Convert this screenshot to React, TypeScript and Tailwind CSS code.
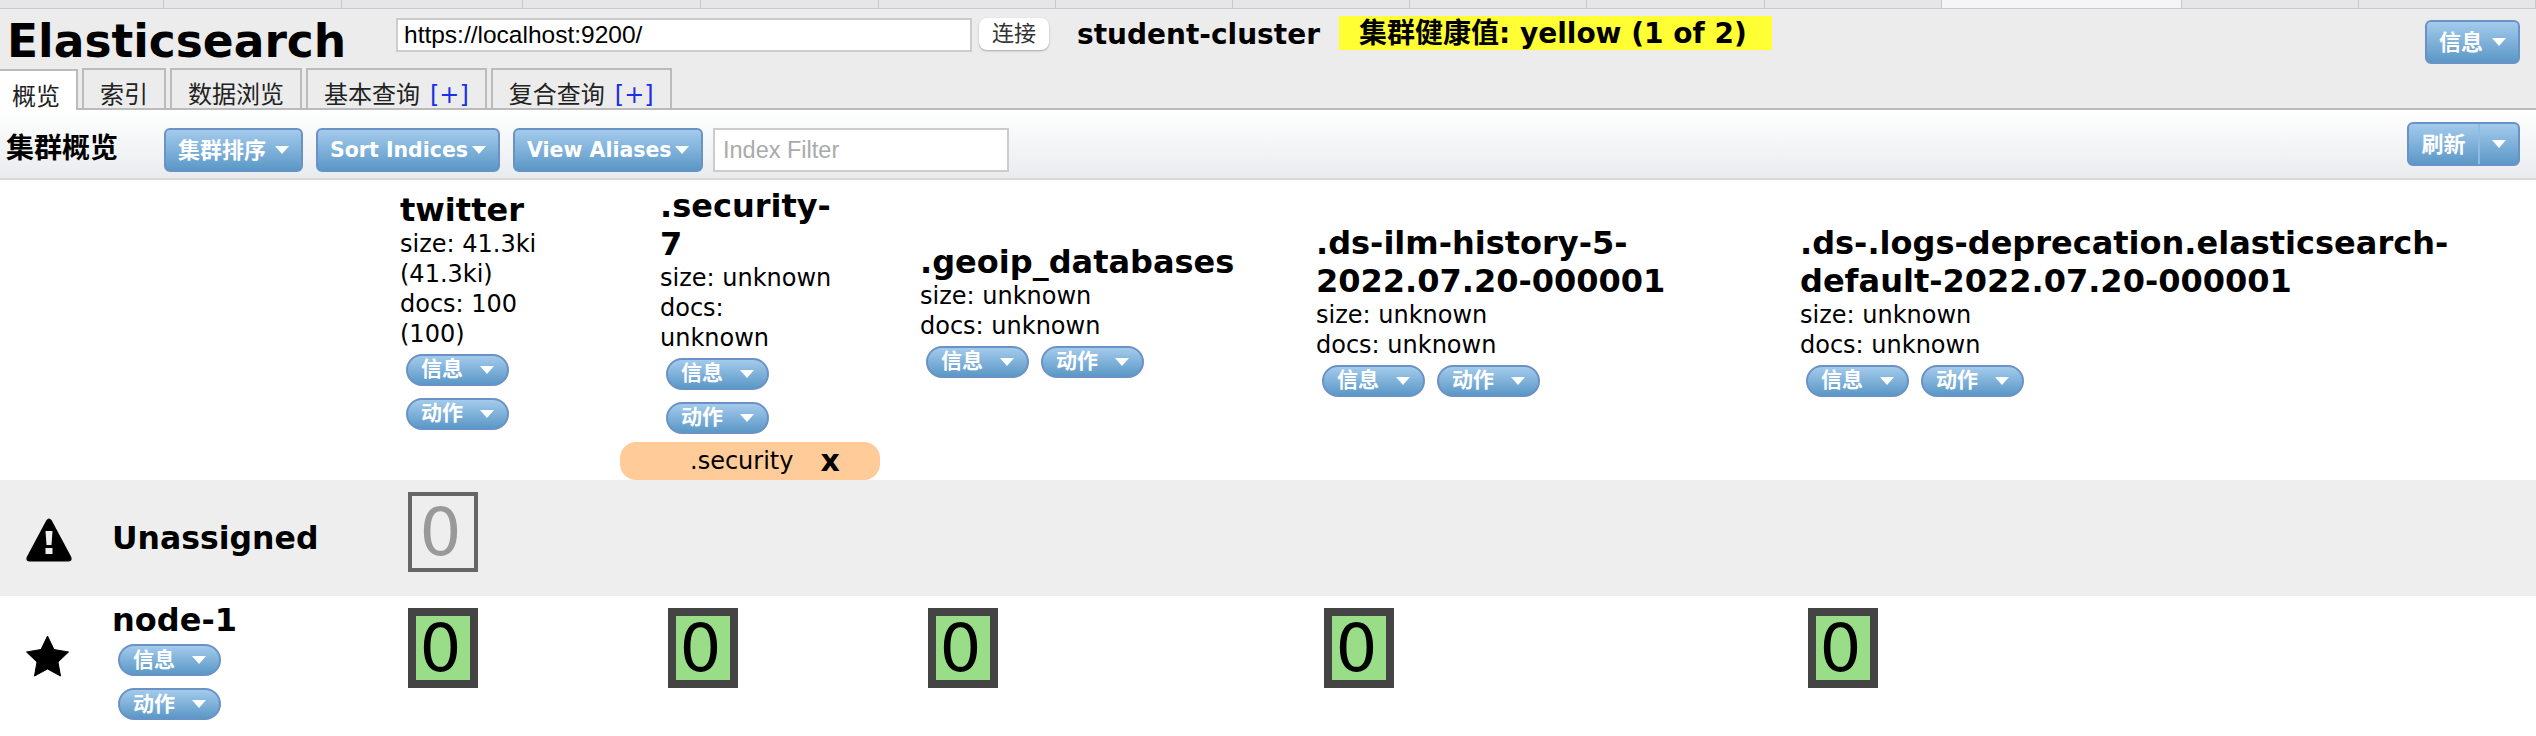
import React from 'react';

const gridCols = 'grid grid-cols-[360px_260px_260px_396px_484px_1fr]';

const Caret = () => (
  <span className="inline-block w-0 h-0 border-x-[7px] border-x-transparent border-t-[8px] border-t-white" />
);

const blueBg = 'bg-gradient-to-b from-[#a3cbec] to-[#5b98c7] border-2 border-[#6b92c6] text-white font-bold';

const MenuButton = ({ label, className = '' }: { label: string; className?: string }) => (
  <button className={`${blueBg} h-[44px] px-[12px] rounded-[6px] flex items-center justify-between whitespace-nowrap ${className}`}>
    {label}
    <Caret />
  </button>
);

const PillButton = ({ label }: { label: string }) => (
  <button className={`${blueBg} w-[103px] h-[32px] pl-[13px] pr-[13px] rounded-full flex items-center justify-between text-[21px] leading-none`}>
    {label}
    <Caret />
  </button>
);

const IndexHead = ({ name, lines, narrow }: { name: React.ReactNode; lines: string[]; narrow?: boolean }) => (
  <div className="pl-[40px] flex items-center">
    <div className={narrow ? 'w-[176px]' : ''}>
      <div className="text-[32px] leading-[38px] font-bold">{name}</div>
      <div className="text-[24px] leading-[30px]">
        {lines.map((l) => (
          <div key={l}>{l}</div>
        ))}
      </div>
      <div className="flex flex-wrap gap-[12px] ml-[6px] mt-[5px]">
        <PillButton label="信息" />
        <PillButton label="动作" />
      </div>
    </div>
  </div>
);

const Shard = ({ active }: { active?: boolean }) => (
  <div className="pl-[48px]">
    <div
      className={
        active
          ? 'w-[70px] h-[80px] border-[8px] border-[#444444] bg-[#99dd88] flex items-center justify-center pr-[5px] text-[66px] text-black'
          : 'w-[70px] h-[80px] border-[4px] border-[#666666] flex items-center justify-center pr-[5px] text-[66px] text-[#999999]'
      }
    >
      0
    </div>
  </div>
);

const WarningIcon = () => (
  <svg width="46" height="44" viewBox="0 0 46 44" className="block">
    <path
      fillRule="evenodd"
      d="M20.5 2 Q23 -1 25.5 2 L45 38.5 Q47 43 42.5 43.5 L3.5 43.5 Q-1 43 1 38.5 Z M19.5 13 L26.5 13 L25.5 27 L20.5 27 Z M19.5 30 L26.5 30 L26.5 36 L19.5 36 Z"
    />
  </svg>
);

const StarIcon = () => (
  <svg width="44" height="43" viewBox="0 0 44 43" className="block">
    <polygon
      points="21.5,1 28,14.5 42.5,17 32,27 34.5,41 21.5,34 8.5,41 11,27 0.5,17 15,14.5"
      stroke="black"
      strokeWidth="1"
      strokeLinejoin="round"
    />
  </svg>
);

const tabCls = 'h-[40px] border-2 border-b-0 border-[#bbbbbb] px-[16px] pt-[12px] text-[24px] flex items-center text-[#222222]';

const App: React.FC = () => {
  const strip = [165, 179, 181, 179, 179, 178, 178, 178, 178, 178, 178];
  return (
    <div className="w-[2536px] h-[736px] overflow-hidden bg-white text-black font-['DejaVu_Sans','Noto_Sans_CJK_SC',sans-serif]">
      {/* browser tab strip */}
      <div className="h-[9px] flex bg-[#e6e6e8] border-b border-[#c8c8c8]">
        {strip.map((w, i) => (
          <div key={i} className="border-r border-[#c8c8c8]" style={{ width: w }} />
        ))}
        <div className="w-[241px] bg-[#f5f5f7] border-r border-[#c8c8c8]" />
        <div className="w-[178px] border-r border-[#c8c8c8]" />
        <div className="w-[178px] border-r border-[#c8c8c8]" />
      </div>

      {/* header */}
      <div className="h-[101px] bg-[#ececec] border-b-2 border-[#bbbbbb]">
        <div className="flex items-start h-[59px]">
          <h1 className="ml-[7px] w-[389px] mt-[7px] text-[45.5px] leading-[52px] font-bold">Elasticsearch</h1>
          <input
            readOnly
            value="https://localhost:9200/"
            className="mt-[9px] w-[576px] h-[34px] bg-white border-2 border-[#cccccc] px-[6px] text-[24.5px] font-['Liberation_Sans',sans-serif] outline-none"
          />
          <button className="ml-[7px] mt-[9px] w-[70px] h-[32px] bg-white rounded-[8px] shadow-[0_1px_2px_rgba(0,0,0,0.3)] text-[22px] leading-none text-[#333333]">
            连接
          </button>
          <span className="ml-[28px] w-[262px] mt-[10px] text-[28px] leading-[32px] font-bold whitespace-nowrap">student-cluster</span>
          <span className="mt-[7px] h-[34px] w-[433px] pl-[20px] bg-[#ffff33] text-[28px] leading-[36px] font-bold whitespace-nowrap">
            集群健康值: yellow (1 of 2)
          </span>
          <MenuButton label="信息" className="ml-auto mr-[16px] mt-[11px] w-[95px] text-[22px]" />
        </div>
        <div className="flex items-end gap-[4px]">
          <div className="h-[41px] w-[78px] bg-white border-2 border-b-0 border-l-0 border-[#bbbbbb] pl-[12px] pt-[12px] text-[24px] flex items-center -mb-[2px] text-[#222222]">
            概览
          </div>
          <div className={tabCls}>索引</div>
          <div className={tabCls}>数据浏览</div>
          <div className={tabCls}>
            基本查询<span className="ml-[10px] text-[#1a2fe8]">[+]</span>
          </div>
          <div className={tabCls}>
            复合查询<span className="ml-[10px] text-[#1a2fe8]">[+]</span>
          </div>
        </div>
      </div>

      {/* toolbar */}
      <div className="h-[70px] bg-gradient-to-b from-white to-[#e9ecee] border-b-2 border-[#d8d8d8] flex items-start pr-[16px]">
        <h2 className="ml-[6px] mt-[21px] w-[158px] text-[28px] leading-[36px] font-bold">集群概览</h2>
        <div className="flex gap-[13px] mt-[18px]">
          <MenuButton label="集群排序" className="w-[139px] text-[22px]" />
          <MenuButton label="Sort Indices" className="w-[184px] text-[20.5px]" />
          <MenuButton label="View Aliases" className="w-[190px] text-[20.5px]" />
        </div>
        <input
          readOnly
          placeholder="Index Filter"
          className="ml-[10px] mt-[18px] w-[296px] h-[44px] bg-white border-2 border-[#cccccc] px-[8px] text-[23.5px] font-['Liberation_Sans',sans-serif] placeholder:text-[#aaaaaa] outline-none"
        />
        <div className={`${blueBg} ml-auto mt-[12px] h-[44px] w-[113px] rounded-[6px] flex`}>
          <span className="w-[71px] border-r-2 border-[#8fbce4] flex items-center justify-center text-[22px]">刷新</span>
          <span className="flex-1 flex items-center justify-center">
            <Caret />
          </span>
        </div>
      </div>

      {/* index headers */}
      <div className={`${gridCols} h-[260px]`}>
        <div />
        <IndexHead name="twitter" lines={['size: 41.3ki', '(41.3ki)', 'docs: 100', '(100)']} narrow />
        <IndexHead
          name={
            <>
              .security-
              <br />7
            </>
          }
          lines={['size: unknown', 'docs:', 'unknown']}
          narrow
        />
        <IndexHead name=".geoip_databases" lines={['size: unknown', 'docs: unknown']} />
        <IndexHead
          name={
            <>
              .ds-ilm-history-5-
              <br />
              2022.07.20-000001
            </>
          }
          lines={['size: unknown', 'docs: unknown']}
        />
        <IndexHead
          name={
            <>
              .ds-.logs-deprecation.elasticsearch-
              <br />
              default-2022.07.20-000001
            </>
          }
          lines={['size: unknown', 'docs: unknown']}
        />
      </div>

      {/* aliases */}
      <div className={`${gridCols} h-[40px] pt-[2px]`}>
        <div />
        <div />
        <div className="h-[38px] bg-[#ffcc99] rounded-[16px] text-[24px] pl-[70px] flex items-center">
          .security
          <span className="ml-[27px] font-bold text-[30px] leading-none">x</span>
        </div>
      </div>

      {/* unassigned */}
      <div className={`${gridCols} h-[116px] bg-[#eeeeee]`}>
        <div className="flex items-center">
          <span className="w-[112px] pl-[26px] pt-[4px]">
            <WarningIcon />
          </span>
          <span className="text-[31.5px] pt-[2px] font-bold">Unassigned</span>
        </div>
        <div className="pt-[12px]">
          <Shard />
        </div>
      </div>

      {/* node */}
      <div className={`${gridCols} h-[140px]`}>
        <div className="flex items-start pt-[5px]">
          <span className="w-[112px] pl-[26px] pt-[34px]">
            <StarIcon />
          </span>
          <div>
            <div className="text-[32px] leading-[38px] font-bold">node-1</div>
            <div className="ml-[6px] mt-[5px] flex flex-col gap-[12px]">
              <PillButton label="信息" />
              <PillButton label="动作" />
            </div>
          </div>
        </div>
        {[0, 1, 2, 3, 4].map((i) => (
          <div key={i} className="pt-[12px]">
            <Shard active />
          </div>
        ))}
      </div>
    </div>
  );
};

export default App;
